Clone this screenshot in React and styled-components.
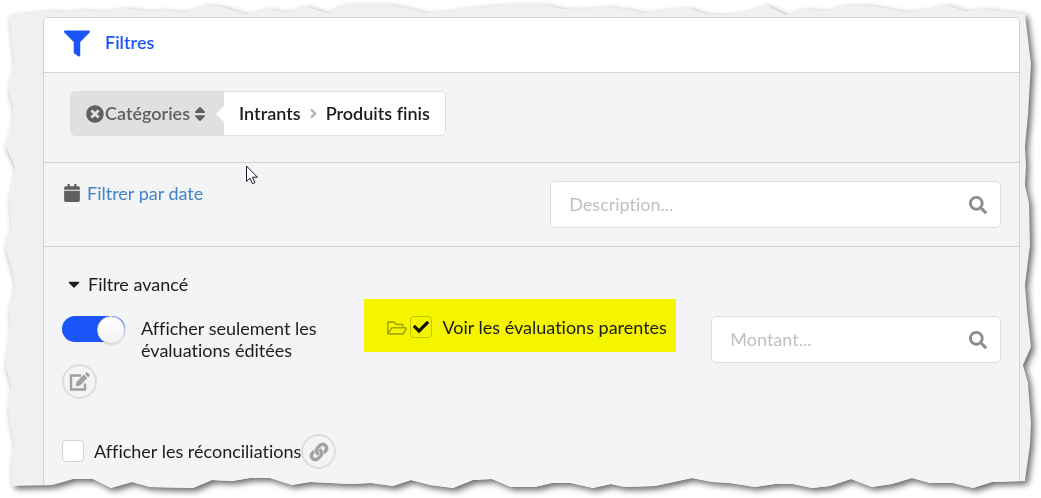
import { useState } from 'react';
import styled, { createGlobalStyle } from 'styled-components';
import {
  FaFilter,
  FaTimesCircle,
  FaSort,
  FaAngleRight,
  FaCalendar,
  FaSearch,
  FaCaretDown,
  FaRegFolderOpen,
  FaLink,
  FaCheck,
} from 'react-icons/fa';

// torn outline: left/right points are [inset from the side, height in %]
// top/bottom points are [position in %, inset from the side]
const px = (list, size) => list.map(([a, b]) => [a / size * 100, b]);

const topEdge = px([
  [30, 13], [50, 11], [64, 12], [85, 10], [106, 12], [124, 8], [146, 11], [165, 10], [184, 12],
  [206, 5], [222, 7], [246, 14], [267, 9], [286, 12], [306, 6], [326, 13], [343, 5], [390, 5],
  [410, 9], [426, 13], [450, 11], [470, 8], [500, 5], [547, 5], [563, 9], [587, 9], [608, 7],
  [625, 9], [645, 13], [665, 10], [688, 8], [706, 14], [725, 15], [745, 12], [766, 5], [786, 15],
  [805, 9], [826, 11], [842, 6], [863, 5], [884, 8], [906, 12], [925, 10], [946, 5], [966, 11],
  [985, 9],
], 1041);

const bottomEdge = px([
  [992, 16], [973, 10], [953, 15], [930, 15], [912, 20], [892, 14], [872, 11], [851, 19],
  [830, 12], [812, 10], [793, 14], [775, 14], [755, 11], [730, 15], [712, 16], [692, 20],
  [655, 12], [625, 11], [611, 14], [593, 10], [571, 15], [552, 15], [535, 11], [511, 11],
  [492, 19], [473, 18], [453, 10], [430, 13], [411, 18], [393, 12], [371, 15], [350, 14],
  [331, 15], [310, 16], [292, 13], [270, 20], [250, 20], [232, 17], [212, 18], [193, 10],
  [150, 11], [132, 16], [111, 10], [93, 19], [73, 19], [52, 13],
], 1041);

const rightEdge = px([
  [14, 16], [64, 10], [115, 13], [147, 16], [165, 15], [185, 16], [203, 12], [245, 11],
  [285, 16], [310, 14], [347, 10], [365, 18], [383, 13], [423, 10], [445, 11], [481, 16],
], 498);

const leftEdge = px([
  [486, 12], [465, 11], [446, 14], [410, 8], [385, 11], [365, 5], [330, 10], [310, 9],
  [286, 15], [270, 12], [247, 5], [225, 11], [200, 9], [167, 15], [145, 5], [125, 12],
  [107, 13], [88, 8], [64, 14], [16, 9],
], 498);

const tornShape = [
  ...topEdge.map(([x, y]) => `${x.toFixed(2)}% ${y}px`),
  ...rightEdge.map(([y, x]) => `calc(100% - ${x}px) ${y.toFixed(2)}%`),
  ...bottomEdge.map(([x, y]) => `${x.toFixed(2)}% calc(100% - ${y}px)`),
  ...leftEdge.map(([y, x]) => `${x}px ${y.toFixed(2)}%`),
].join(', ');

const EditIcon = () => (
  <svg width="22" height="20" viewBox="0 0 22 20" aria-hidden="true">
    <path d="M12 3.500H2v14h14v-6" fill="none" stroke="currentColor" strokeWidth="2.400" />
    <path d="M6.700 14.200l.8-4.300 7.300-7.300 3.500 3.500-7.300 7.300zM15.800 1.700l1-1q1-.9 2 0l1.500 1.500q.9 1 0 2l-1 1z" fill="currentColor" />
  </svg>
);

const App = () => {
  const [edited, setEdited] = useState(true);
  const [parents, setParents] = useState(true);
  const [reconciled, setReconciled] = useState(false);
  const [open, setOpen] = useState(true);

  return (
    <Shadow>
      <GlobalStyle />
      <Sheet>
        <Panel>
          <Header>
            <FaFilter />
            <Title>Filtres</Title>
          </Header>

          <Categories>
            <Crumbs>
              <CategoryButton type="button">
                <FaTimesCircle size={18} />
                <span>Catégories</span>
                <FaSort size={18} />
              </CategoryButton>
              <Path>
                <a href="#intrants">Intrants</a>
                <FaAngleRight size={15} />
                <a href="#produits-finis">Produits finis</a>
              </Path>
            </Crumbs>
          </Categories>

          <SearchRow>
            <DateLink href="#date">
              <FaCalendar size={18} />
              Filtrer par date
            </DateLink>
            <SearchBox>
              <SearchInput type="text" placeholder="Description..." aria-label="Description" />
              <FaSearch size={18} />
            </SearchBox>
          </SearchRow>

          <Advanced>
            <Toggle type="button" aria-expanded={open} onClick={() => setOpen(!open)}>
              <FaCaretDown size={18} />
              Filtre avancé
            </Toggle>
            {open && (
              <Columns>
                <Column>
                  <SwitchLabel>
                    <Switch type="checkbox" checked={edited} onChange={() => setEdited(!edited)} />
                    <span>Afficher seulement les évaluations éditées</span>
                  </SwitchLabel>
                  <RoundButton type="button" aria-label="Modifier">
                    <EditIcon />
                  </RoundButton>
                  <CheckRow>
                    <CheckLabel>
                      <Box>
                        <input type="checkbox" checked={reconciled} onChange={() => setReconciled(!reconciled)} />
                        {reconciled && <FaCheck size={16} />}
                      </Box>
                      Afficher les réconciliations
                    </CheckLabel>
                    <RoundButton type="button" aria-label="Lier">
                      <FaLink size={18} stroke="currentColor" strokeWidth={20} />
                    </RoundButton>
                  </CheckRow>
                </Column>
                <Highlight>
                  <FaRegFolderOpen size={20} />
                  <CheckLabel>
                    <Box $marked>
                      <input type="checkbox" checked={parents} onChange={() => setParents(!parents)} />
                      {parents && <FaCheck size={16} />}
                    </Box>
                    Voir les évaluations parentes
                  </CheckLabel>
                </Highlight>
                <Column>
                  <SearchBox>
                    <SearchInput type="text" placeholder="Montant..." aria-label="Montant" />
                    <FaSearch size={18} />
                  </SearchBox>
                </Column>
              </Columns>
            )}
          </Advanced>
        </Panel>
        <Pointer width="13" height="20" viewBox="0 0 13 20" aria-hidden="true">
          <path d="M.5 1v15.500l3.500-3.400 2.500 5.600 2.400-1-2.500-5.500h5z" fill="#fff" stroke="#1a1a2a" />
        </Pointer>
      </Sheet>
    </Shadow>
  );
};

const GlobalStyle = createGlobalStyle`
  * {
    box-sizing: border-box;
  }
  body {
    margin: 0;
    background: #fff;
    color: #1b1c1d;
    font-family: Lato, "Liberation Sans", sans-serif;
    font-size: 18px;
    font-variant-ligatures: no-common-ligatures;
    line-height: 22px;
  }
  button, input {
    font: inherit;
    font-variant-ligatures: inherit;
  }
  button {
    cursor: pointer;
  }
  svg {
    flex-shrink: 0;
  }
`;

const Shadow = styled.div`
  filter: drop-shadow(3px 3px 3px rgba(0, 0, 0, 0.6));
`;

const Sheet = styled.div`
  position: relative;
  display: flex;
  min-height: 100vh;
  padding: 17px 21px 0 43px;
  background: #f0f0f0;
  clip-path: polygon(${tornShape});
`;

const Panel = styled.main`
  flex: 1;
  min-width: 0;
  background: #f3f4f6;
  border: 1px solid #d0d2d4;
  border-bottom: none;
  border-radius: 5px 5px 0 0;
`;

const Header = styled.header`
  display: flex;
  align-items: flex-start;
  gap: 15px;
  padding: 12px 20px 15px;
  background: #fff;
  border-bottom: 1px solid #d0d2d4;
  border-radius: 4px 4px 0 0;
  color: #1b55f7;
  svg {
    width: 26px;
    height: 27px;
  }
`;

const Title = styled.h1`
  margin: 0;
  font-size: 18px;
  font-weight: 600;
  line-height: 24px;
`;

const Categories = styled.section`
  padding: 18px 26px 26px;
  border-bottom: 1px solid #d0d2d4;
`;

const Crumbs = styled.nav`
  display: inline-flex;
  vertical-align: top;
  height: 45px;
  border: 1px solid #dededf;
  border-radius: 5px;
  background: #fff;
  font-weight: 600;
`;

const CategoryButton = styled.button`
  position: relative;
  display: flex;
  align-items: center;
  padding: 0 15px;
  border: none;
  border-radius: 4px 0 0 4px;
  background: #dfe0e2;
  color: #5f6160;
  span {
    padding: 0 1px 2px;
  }
  &::after {
    content: "";
    position: absolute;
    right: 0;
    top: 14px;
    border: 8px solid transparent;
    border-left: none;
    border-right-color: #fff;
  }
`;

const Path = styled.div`
  display: flex;
  align-items: center;
  gap: 5px;
  padding: 0 15px;
  a {
    padding-bottom: 2px;
    color: #1b1c1d;
    text-decoration: none;
  }
  svg {
    color: #b4b5b6;
  }
`;

const SearchRow = styled.section`
  display: flex;
  align-items: flex-start;
  justify-content: space-between;
  padding: 18px;
  border-bottom: 1px solid #d0d2d4;
  > div {
    width: 48%;
  }
`;

const DateLink = styled.a`
  display: flex;
  align-items: center;
  gap: 6px;
  padding: 1px;
  color: #4183c4;
  text-decoration: none;
  svg {
    color: #5f6160;
  }
`;

const SearchBox = styled.div`
  display: flex;
  align-items: center;
  height: 47px;
  padding: 0 13px 0 18px;
  border: 1px solid #dededf;
  border-radius: 5px;
  background: #fff;
  svg {
    color: #8c8c8c;
  }
`;

const SearchInput = styled.input`
  flex: 1;
  min-width: 0;
  padding: 0 0 2px;
  border: none;
  outline: none;
  background: transparent;
  &::placeholder {
    color: #c0c0c0;
  }
`;

const Advanced = styled.section`
  padding: 26px 18px;
`;

const Toggle = styled.button`
  display: flex;
  align-items: center;
  gap: 5px;
  padding: 0 3px;
  border: none;
  background: none;
  color: #1b1c1d;
`;

const Columns = styled.div`
  display: grid;
  grid-template-columns: minmax(0, 12fr) minmax(0, 14fr) minmax(0, 13fr);
  gap: 35px;
  align-items: start;
  padding-top: 4px;
`;

const Column = styled.div`
  padding-top: 17px;
`;

const SwitchLabel = styled.label`
  display: flex;
  align-items: flex-start;
  gap: 16px;
  margin-bottom: 3px;
  span {
    padding-top: 1px;
  }
`;

const Switch = styled.input`
  appearance: none;
  flex-shrink: 0;
  width: 63px;
  height: 26px;
  margin: 0;
  border-radius: 13px;
  background: ${(props) => (props.checked ? '#1b55f7' : '#dcdddf')};
  &::before {
    content: "";
    display: block;
    width: 26px;
    height: 26px;
    margin-left: ${(props) => (props.checked ? 'auto' : '0')};
    border: 1px solid #d4d4d5;
    border-radius: 50%;
    background: linear-gradient(#fff, #f2f2f2);
    box-shadow: 0 1px 2px rgba(34, 36, 38, 0.15);
  }
`;

const RoundButton = styled.button`
  display: flex;
  align-items: center;
  justify-content: center;
  flex-shrink: 0;
  width: 35px;
  height: 35px;
  padding: 0;
  border: 2px solid #dcddde;
  border-radius: 50%;
  background: none;
  color: #a0a0a0;
  svg {
    overflow: visible;
  }
`;

const CheckRow = styled.div`
  display: flex;
  align-items: center;
  padding-top: 35px;
`;

const CheckLabel = styled.label`
  display: flex;
  align-items: center;
  gap: 10px;
  padding-bottom: 2px;
  white-space: nowrap;
`;

const Box = styled.span`
  display: grid;
  place-items: center;
  width: 22px;
  height: 22px;
  border: 1px solid ${(props) => (props.$marked ? '#c4c400' : '#d4d4d5')};
  border-radius: 4px;
  background: ${(props) => (props.$marked ? 'transparent' : '#fff')};
  > * {
    grid-area: 1 / 1;
  }
  input {
    appearance: none;
    width: 20px;
    height: 20px;
    margin: 0;
  }
  svg {
    color: #10110a;
    pointer-events: none;
  }
`;

const Highlight = styled.div`
  display: flex;
  align-items: center;
  gap: 3px;
  min-height: 53px;
  padding: 5px 0 0 23px;
  background: #f5f500;
  > svg {
    color: #a8a800;
  }
`;

const Pointer = styled.svg`
  position: absolute;
  left: 246px;
  top: 165px;
`;

export default App;
